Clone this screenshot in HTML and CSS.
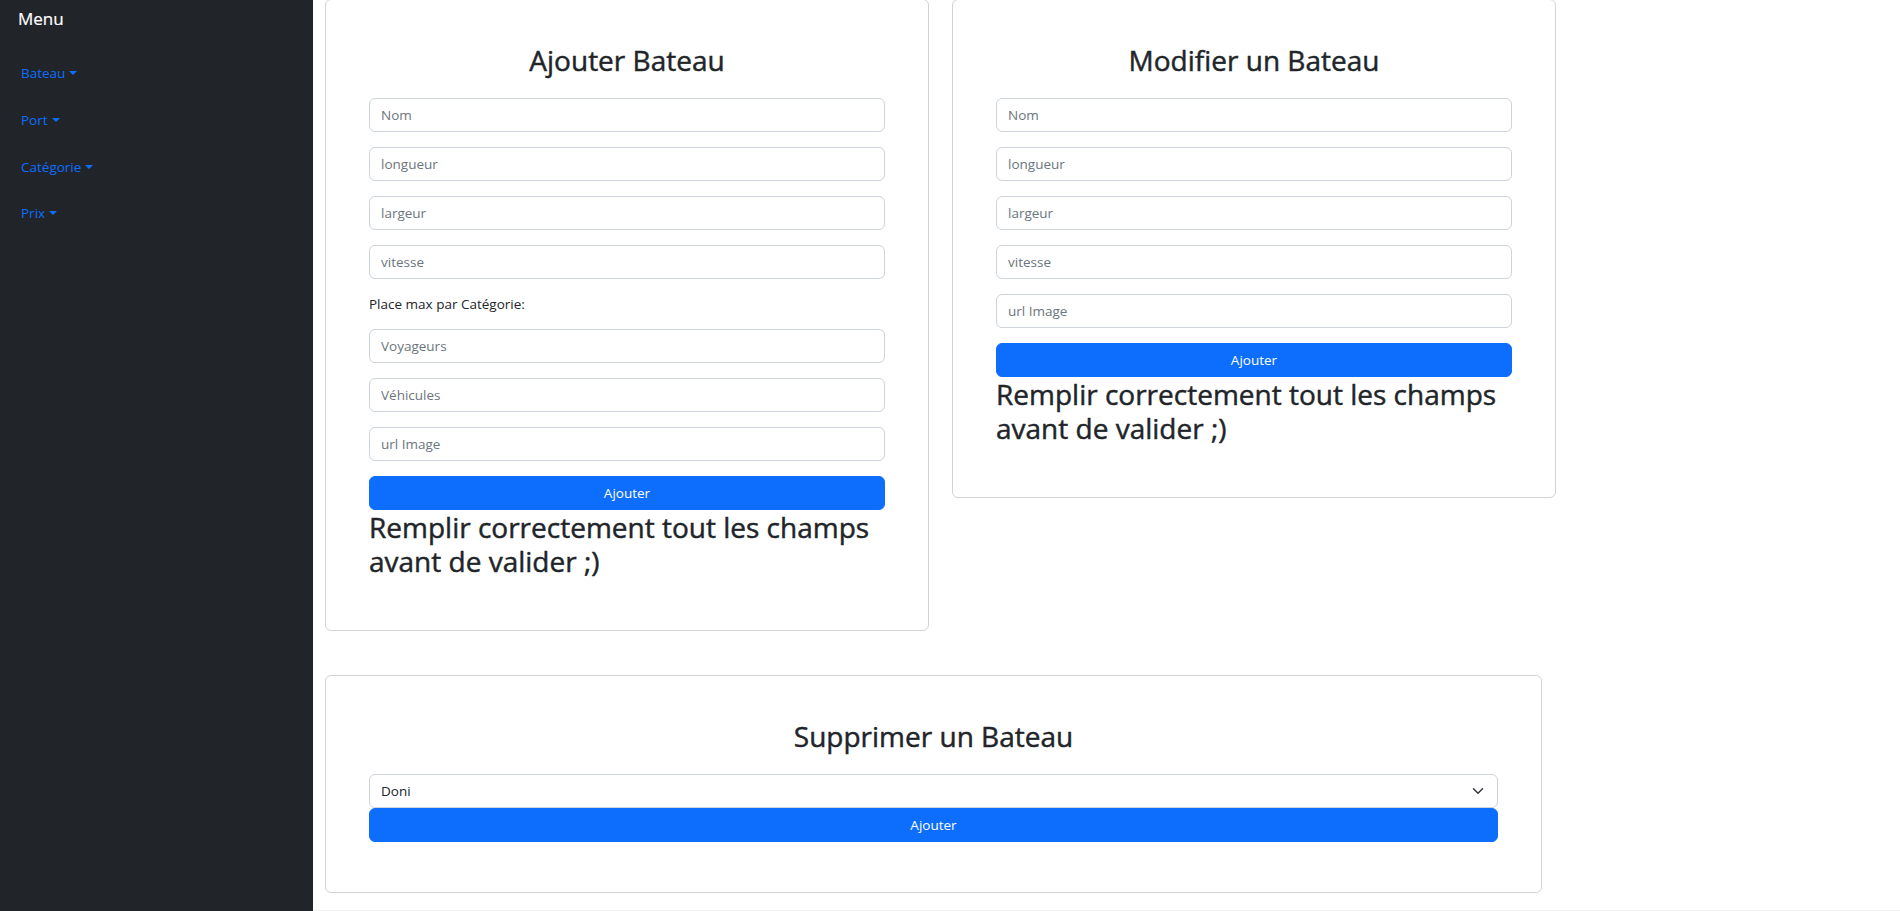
FILE: index.html
```html
<!DOCTYPE html>
<html lang="fr">
<head>
<meta charset="utf-8">
<title>Bateaux</title>
<link rel="stylesheet" href="styles.css">
</head>
<body>
<div class="app">
  <aside class="sidebar">
    <div class="brand">Menu</div>
    <ul class="nav">
      <li class="nav-item"><a class="nav-link" href="#">Bateau<span class="caret"></span></a></li>
      <li class="nav-item"><a class="nav-link" href="#">Port<span class="caret"></span></a></li>
      <li class="nav-item"><a class="nav-link" href="#">Catégorie<span class="caret"></span></a></li>
      <li class="nav-item"><a class="nav-link" href="#">Prix<span class="caret"></span></a></li>
    </ul>
  </aside>
  <main class="main">
    <div class="row-top">
      <section class="card">
        <h3 class="card-title">Ajouter Bateau</h3>
        <form class="form">
          <input class="field" type="text" placeholder="Nom">
          <input class="field" type="text" placeholder="longueur">
          <input class="field" type="text" placeholder="largeur">
          <input class="field" type="text" placeholder="vitesse">
          <p class="label">Place max par Catégorie:</p>
          <input class="field" type="text" placeholder="Voyageurs">
          <input class="field" type="text" placeholder="Véhicules">
          <input class="field" type="text" placeholder="url Image">
          <button class="btn" type="button">Ajouter</button>
        </form>
        <h3 class="hint">Remplir correctement tout les champs avant de valider ;)</h3>
      </section>
      <section class="card">
        <h3 class="card-title">Modifier un Bateau</h3>
        <form class="form">
          <input class="field" type="text" placeholder="Nom">
          <input class="field" type="text" placeholder="longueur">
          <input class="field" type="text" placeholder="largeur">
          <input class="field" type="text" placeholder="vitesse">
          <input class="field" type="text" placeholder="url Image">
          <button class="btn" type="button">Ajouter</button>
        </form>
        <h3 class="hint">Remplir correctement tout les champs avant de valider ;)</h3>
      </section>
    </div>
    <section class="card card-wide">
      <h3 class="card-title">Supprimer un Bateau</h3>
      <div class="select-wrap">
        <select class="select"><option>Doni</option></select>
        <svg class="chevron" width="16" height="12" viewBox="0 0 16 16" aria-hidden="true"><path d="m2 5 6 6 6-6" fill="none" stroke="#343a40" stroke-width="2" stroke-linecap="round" stroke-linejoin="round"/></svg>
      </div>
      <button class="btn" type="button">Ajouter</button>
    </section>
  </main>
</div>
</body>
</html>
```
FILE: styles.css
```css
* { box-sizing: border-box; }
html, body { margin: 0; padding: 0; }
body {
  font-family: "Open Sans", "Noto Sans", sans-serif;
  color: #212529;
  background: #fff;
  overflow: hidden;
}
.app {
  display: flex;
  min-height: 100vh;
}
.sidebar {
  width: 313px;
  flex: 0 0 313px;
  background: #212529;
  padding: 6px 0 0 18px;
}
.brand {
  color: #fff;
  font-size: 17px;
  line-height: 25.5px;
  -webkit-text-stroke: 0.2px #fff;
}
.nav {
  list-style: none;
  margin: 19px 0 0;
  padding: 0 0 0 3px;
}
.nav-item {
  height: 46.67px;
  display: flex;
  align-items: center;
}
.nav-link {
  color: #0d6efd;
  text-decoration: none;
  font-size: 13.5px;
  line-height: 21px;
  display: inline-flex;
  align-items: center;
}
.caret {
  display: inline-block;
  margin-left: 4px;
  margin-top: -1px;
  border-top: 4.5px solid #0d6efd;
  border-left: 4px solid transparent;
  border-right: 4px solid transparent;
}
.main {
  flex: 1;
  padding-left: 12px;
  border-bottom: 1px solid #f1f1f1;
}
.row-top {
  display: flex;
  align-items: flex-start;
  gap: 23px;
  margin-top: -1px;
}
.card {
  width: 604px;
  border: 1px solid #d3d3d3;
  border-radius: 6px;
  padding: 43.5px 43px 43.5px;
  background: #fff;
}
.card-wide {
  width: 1217px;
  margin-top: 44.5px;
  padding-bottom: 50px;
}
.card-title {
  margin: 0 0 21px;
  text-align: center;
  font-size: 28px;
  line-height: 33.6px;
  font-weight: 500;
  -webkit-text-stroke: 0.45px #212529;
}
.form {
  display: flex;
  flex-direction: column;
  gap: 15px;
}
.field {
  display: block;
  width: 100%;
  height: 34px;
  border: 1px solid #ced4da;
  border-radius: 6px;
  padding: 0 11px;
  font-family: inherit;
  font-size: 13.5px;
  color: #212529;
  background: #fff;
  outline: none;
}
.field::placeholder { color: #6c757d; opacity: 1; }
.label {
  margin: 0 0 -1px;
  font-size: 13.5px;
  line-height: 21px;
}
.btn {
  display: block;
  width: 100%;
  height: 34px;
  border: 1px solid #0d6efd;
  border-radius: 6px;
  background: #0d6efd;
  color: #fff;
  font-family: inherit;
  font-size: 13.5px;
  padding: 0;
  cursor: pointer;
}
.hint {
  margin: 0 0 8px;
  font-size: 28px;
  line-height: 34px;
  font-weight: 500;
  -webkit-text-stroke: 0.45px #212529;
}
.select-wrap {
  position: relative;
}
.select {
  display: block;
  width: 100%;
  height: 34px;
  border: 1px solid #ced4da;
  border-radius: 6px;
  padding: 0 36px 0 11px;
  font-family: inherit;
  font-size: 13.5px;
  color: #212529;
  background: #fff;
  appearance: none;
  -webkit-appearance: none;
  outline: none;
}
.chevron {
  position: absolute;
  right: 12px;
  top: 11px;
  pointer-events: none;
}
```
